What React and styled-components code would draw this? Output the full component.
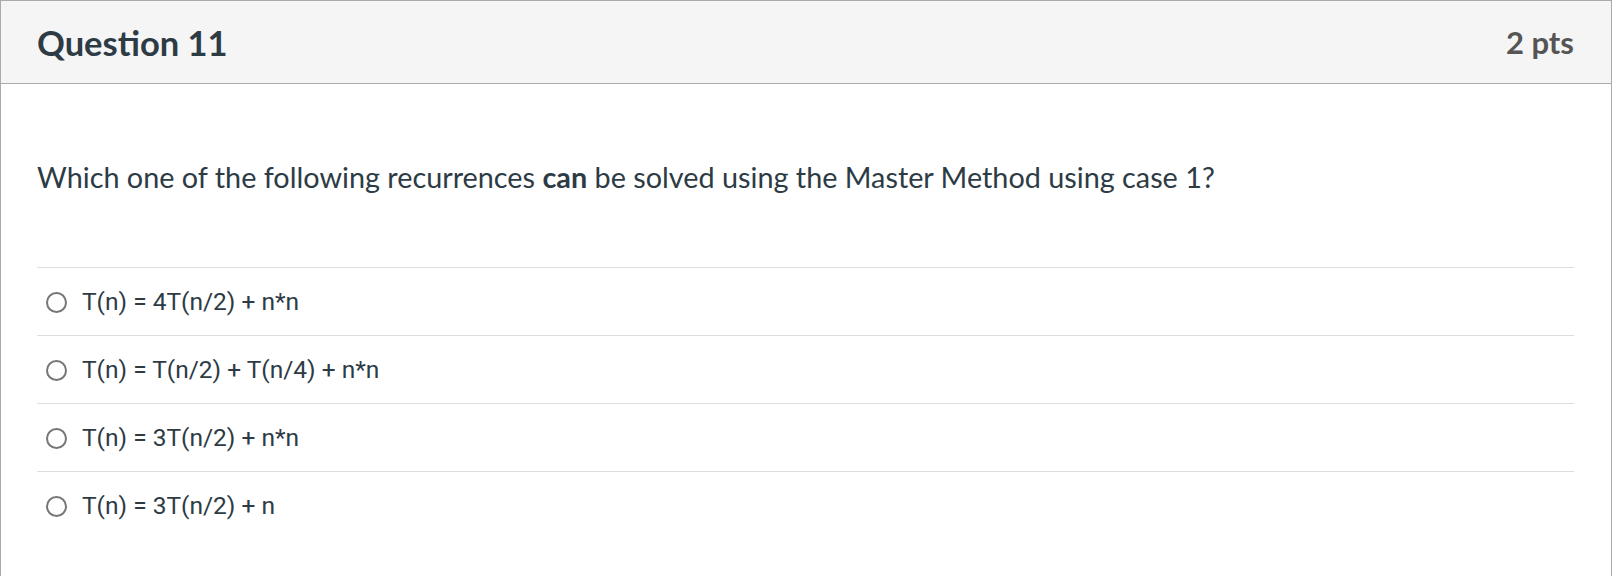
import React from 'react'
import styled, { createGlobalStyle } from 'styled-components'

const GlobalStyle = createGlobalStyle`
  html, body {
    margin: 0;
    padding: 0;
    background: #ffffff;
  }
`

const StyledCard = styled.section`
  box-sizing: border-box;
  width: 1612px;
  height: 576px;
  border: 1px solid #aaaaaa;
  border-bottom: none;
  background-color: #ffffff;
  font-family: Lato, 'Liberation Sans', sans-serif;
  color: #2d3b45;
`

const StyledHeader = styled.header`
  box-sizing: border-box;
  height: 83px;
  padding: 0 37px 0 36px;
  background-color: #f5f5f5;
  border-bottom: 1px solid #aaaaaa;
  display: flex;
  align-items: center;
  justify-content: space-between;
`

const StyledTitle = styled.h2`
  margin: 0;
  font-size: 34.5px;
  font-weight: 700;
  color: #2d3b45;
`

const StyledPoints = styled.span`
  font-size: 31px;
  font-weight: 700;
  color: #555555;
`

const StyledBody = styled.div`
  padding: 0 37px 0 36px;
`

const StyledQuestion = styled.p`
  margin: 0;
  padding: 73px 0 70px;
  font-size: 28.8px;
  line-height: 40px;
`

const StyledAnswers = styled.div`
  display: flex;
  flex-direction: column;
`

const StyledAnswer = styled.label`
  box-sizing: border-box;
  height: 68px;
  border-top: 1px solid #dddddd;
  display: flex;
  align-items: center;
  padding-left: 9px;
  gap: 15px;
  font-family: Roboto, 'Liberation Sans', sans-serif;
  font-size: 24.5px;
  color: #2d3b45;
`

const StyledRadio = styled.span`
  box-sizing: border-box;
  width: 21px;
  height: 21px;
  border-radius: 50%;
  border: 2px solid #767676;
  background: #ffffff;
  flex-shrink: 0;
  margin-top: 2px;
`

const answers = [
  'T(n) = 4T(n/2) + n*n',
  'T(n) = T(n/2) + T(n/4) + n*n',
  'T(n) = 3T(n/2) + n*n',
  'T(n) = 3T(n/2) + n',
]

const App = () => {
  return (
    <>
      <GlobalStyle />
      <StyledCard>
        <StyledHeader>
          <StyledTitle>Question 11</StyledTitle>
          <StyledPoints>2 pts</StyledPoints>
        </StyledHeader>
        <StyledBody>
          <StyledQuestion>
            Which one of the following recurrences <strong>can</strong> be solved using the Master Method using case 1?
          </StyledQuestion>
          <StyledAnswers>
            {answers.map((a) => (
              <StyledAnswer key={a}>
                <StyledRadio />
                {a}
              </StyledAnswer>
            ))}
          </StyledAnswers>
        </StyledBody>
      </StyledCard>
    </>
  )
}

export default App
